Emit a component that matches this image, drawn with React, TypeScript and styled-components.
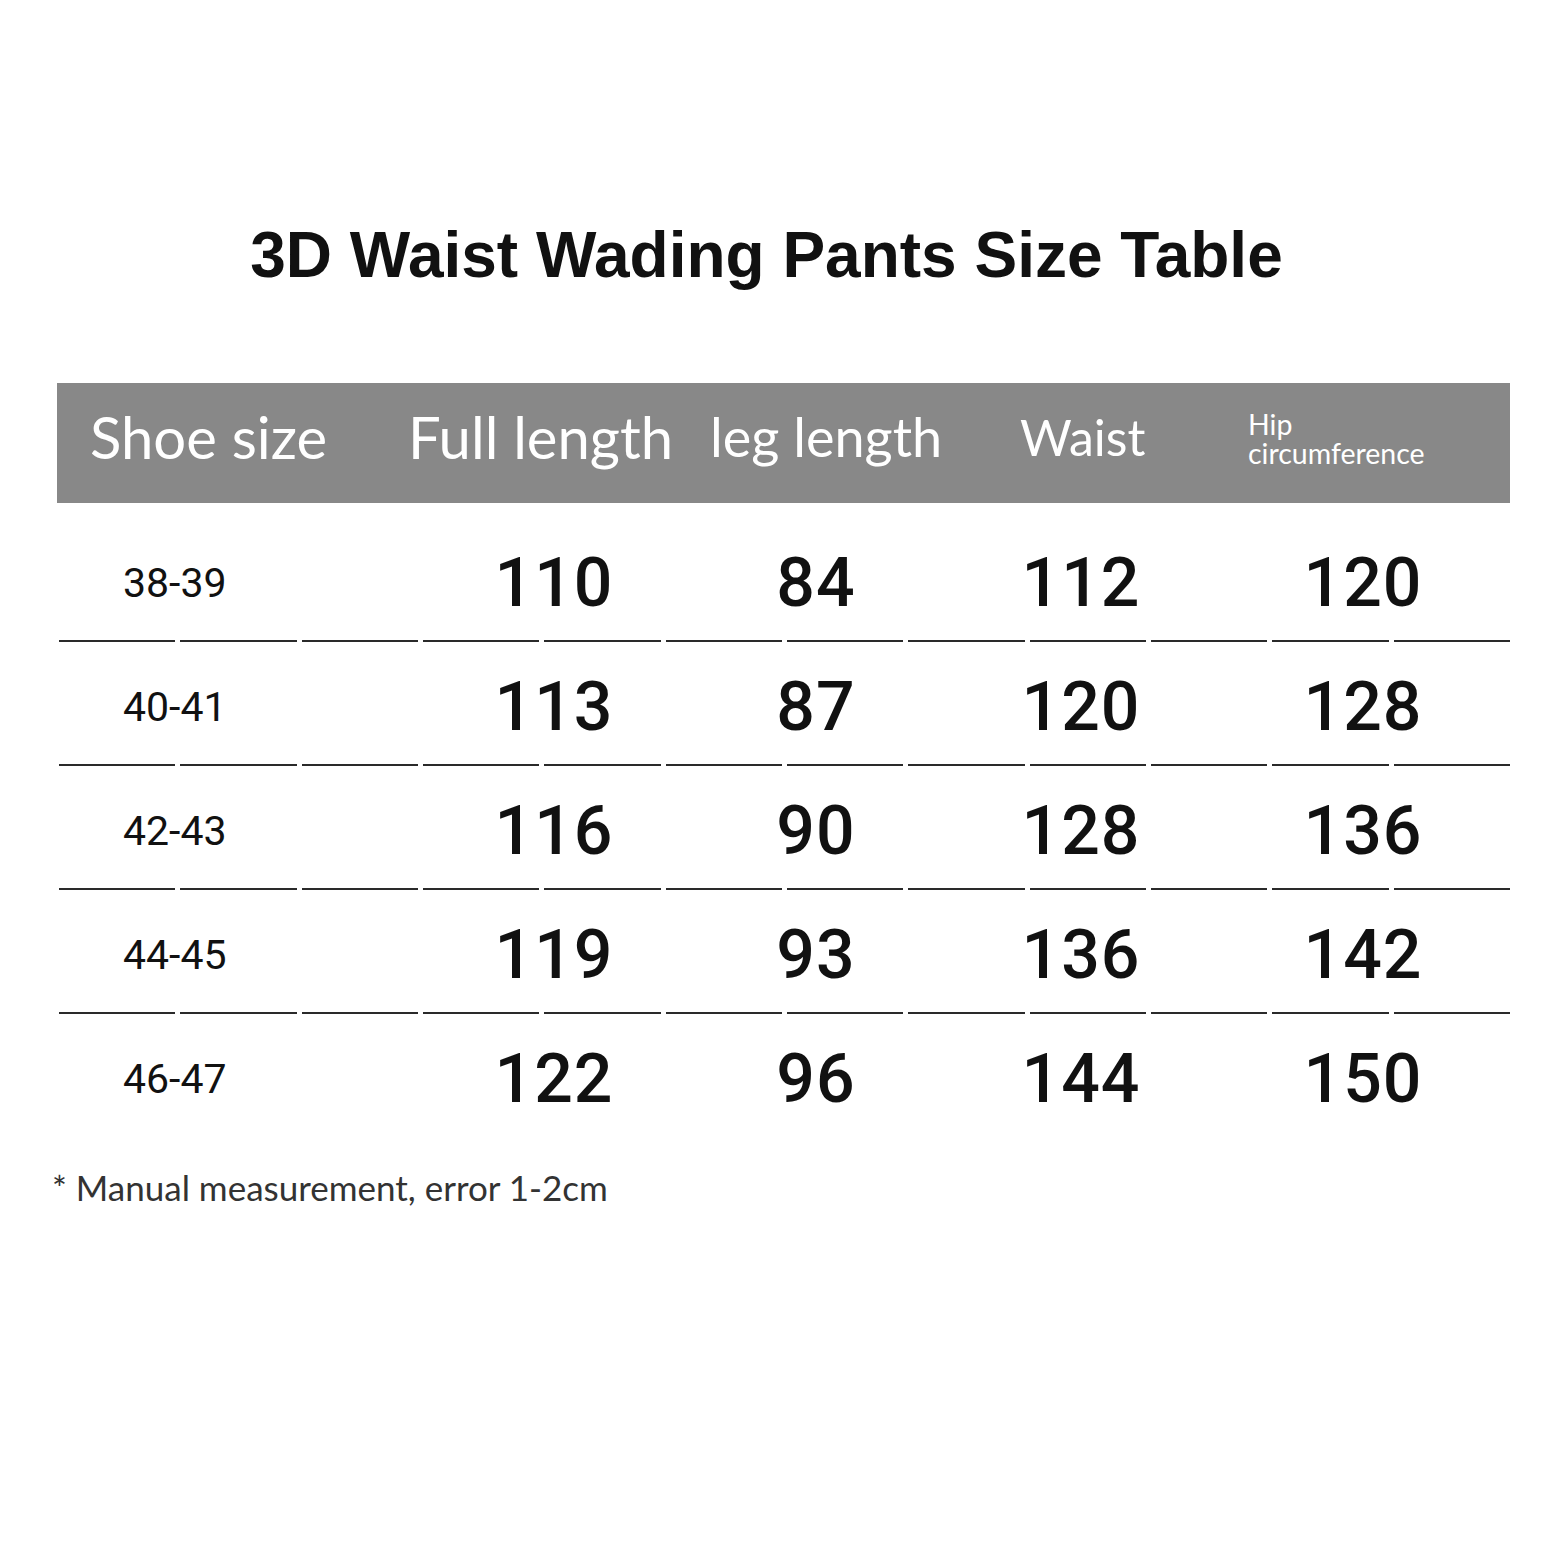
import styled, { createGlobalStyle } from "styled-components";

const GlobalStyle = createGlobalStyle`
  html, body {
    margin: 0;
    padding: 0;
    background: #ffffff;
  }
  body {
    width: 1568px;
    height: 1568px;
    overflow: hidden;
  }
`;

const Page = styled.div`
  box-sizing: border-box;
  width: 1568px;
  height: 1568px;
  padding: 200px 58px 0 57px;
  background: #ffffff;
`;

const Title = styled.h1`
  margin: 0;
  padding-right: 34px;
  height: 110px;
  line-height: 110px;
  text-align: center;
  font-family: "Liberation Sans", Arial, sans-serif;
  font-weight: 700;
  font-size: 64px;
  color: #111111;
`;

const Table = styled.div`
  margin-top: 73px;
  display: flex;
  flex-direction: column;
`;

const HeaderBar = styled.div`
  height: 120px;
  background: #888888;
  display: grid;
  grid-template-columns: 351px 302px 310px 228px 1fr;
  align-items: center;
  padding-bottom: 12px;
  box-sizing: border-box;
  color: #ffffff;
  font-family: Lato, "Open Sans", sans-serif;
`;

const HeadCell = styled.div<{ $pad?: number; $size?: number }>`
  padding-left: ${p => p.$pad || 0}px;
  font-size: ${p => p.$size || 58}px;
  line-height: 1.1;
  white-space: nowrap;
`;

const HeadStack = styled.div`
  display: flex;
  flex-direction: column;
  font-size: 28.5px;
  line-height: 29px;
  white-space: nowrap;
  padding-top: 4px;
`;

const Row = styled.div<{ $first?: boolean }>`
  height: 122px;
  box-sizing: border-box;
  padding-top: 7px;
  display: grid;
  grid-template-columns: 373px 248px 276px 254px 1fr;
  align-items: center;
  margin-top: ${p => (p.$first ? "15px" : "0")};
  font-family: Roboto, "DejaVu Sans", sans-serif;
  color: #111111;
`;

const SizeCell = styled.div`
  padding-left: 66px;
  font-size: 41px;
`;

const NumCell = styled.div<{ $shift?: number }>`
  text-align: center;
  font-size: 68px;
  font-weight: 500;
  letter-spacing: 1px;
  transform: translateX(${p => p.$shift || 0}px);
`;

const Divider = styled.div`
  display: flex;
  gap: 5px;
  height: 2px;
  padding-left: 2px;
`;

const Dash = styled.span`
  flex: 1;
  background: #2a2a2a;
`;

const Note = styled.p`
  margin: 31px 0 0 -5px;
  font-family: Lato, "Open Sans", sans-serif;
  font-size: 35px;
  line-height: 40px;
  color: #333333;
`;

const rows = [
  ["38-39", "110", "84", "112", "120"],
  ["40-41", "113", "87", "120", "128"],
  ["42-43", "116", "90", "128", "136"],
  ["44-45", "119", "93", "136", "142"],
  ["46-47", "122", "96", "144", "150"],
];

export default function App() {
  return (
    <>
      <GlobalStyle />
      <Page>
        <Title>3D Waist Wading Pants Size Table</Title>
        <Table>
          <HeaderBar>
            <HeadCell $pad={33}>Shoe size</HeadCell>
            <HeadCell>Full length</HeadCell>
            <HeadCell $size={54}>leg length</HeadCell>
            <HeadCell $size={50}>Waist</HeadCell>
            <HeadStack>
              <span>Hip</span>
              <span>circumference</span>
            </HeadStack>
          </HeaderBar>
          {rows.map((r, i) => (
            <div key={r[0]}>
              <Row $first={i === 0}>
                <SizeCell>{r[0]}</SizeCell>
                <NumCell>{r[1]}</NumCell>
                <NumCell>{r[2]}</NumCell>
                <NumCell>{r[3]}</NumCell>
                <NumCell $shift={4}>{r[4]}</NumCell>
              </Row>
              {i < rows.length - 1 && (
                <Divider>
                  {Array.from({ length: 12 }).map((_, j) => (
                    <Dash key={j} />
                  ))}
                </Divider>
              )}
            </div>
          ))}
        </Table>
        <Note>* Manual measurement, error 1-2cm</Note>
      </Page>
    </>
  );
}
